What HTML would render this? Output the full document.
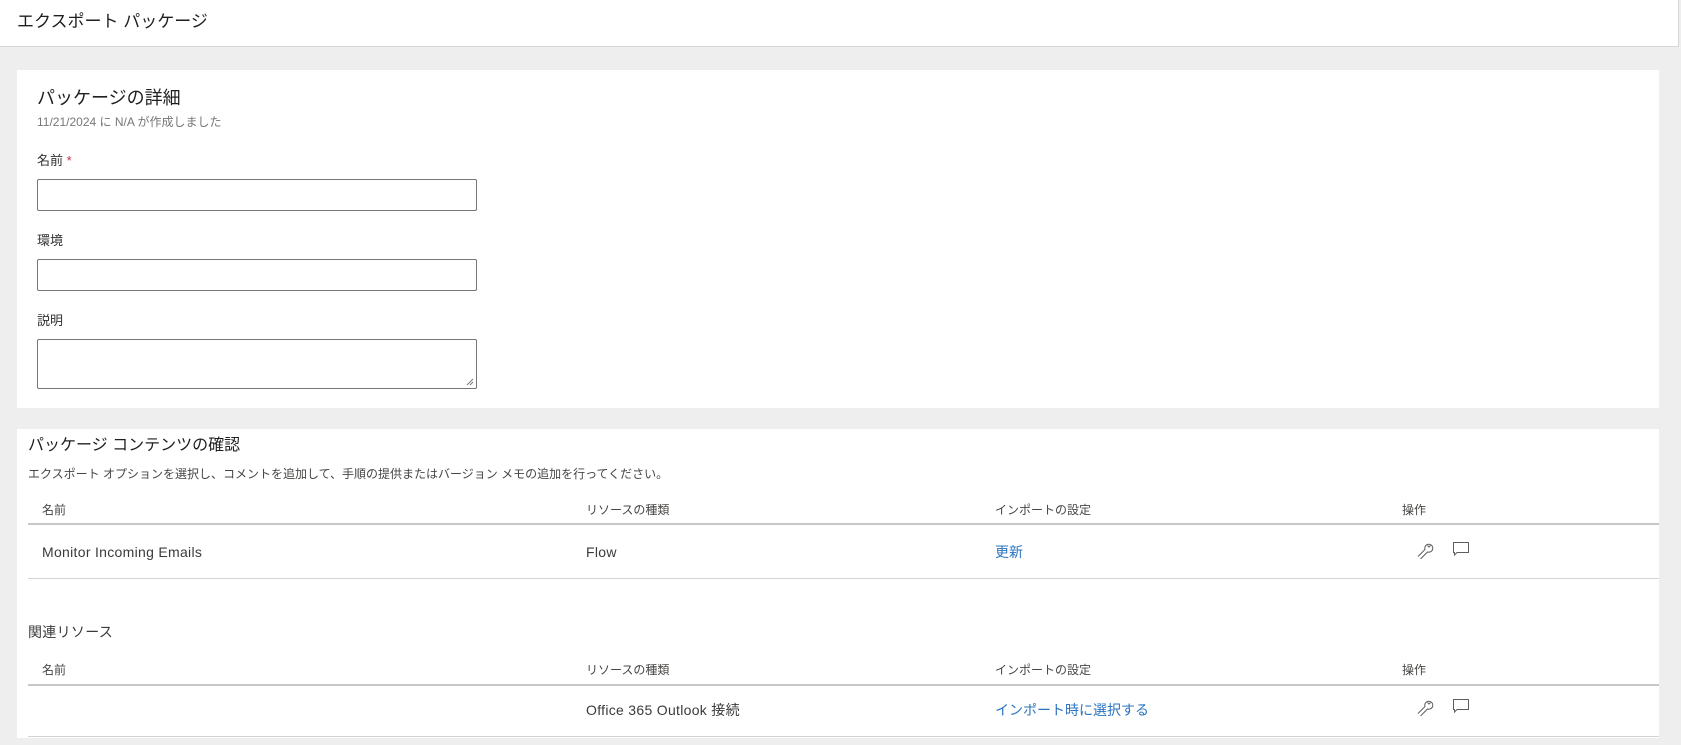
<!DOCTYPE html>
<html><head><meta charset="utf-8"><style>
*{box-sizing:border-box;margin:0;padding:0}
body{width:1681px;height:745px;background:#eeeeee;font-family:"Liberation Sans","Noto Sans CJK JP",sans-serif;color:#323130;position:relative;overflow:hidden}
.a{position:absolute;white-space:nowrap;line-height:1}
.hdr{position:absolute;left:0;top:0;width:1679px;height:47px;background:#fff;border-bottom:1px solid #d6d6d6;border-right:1px solid #d6d6d6}
.card{position:absolute;background:#fff;left:17px;width:1642px}
.inp{position:absolute;left:37px;width:440px;border:1px solid #767676;border-radius:2px;background:#fff}
.line{position:absolute;left:28px;width:1631px;background:#d4d4d4}
.th{font-size:12px;color:#484644}
.td{font-size:14px;color:#3b3a39;letter-spacing:0.3px}
.lk{font-size:14px;color:#2a74c0}
</style></head><body>
<div class="hdr"></div>
<div class="a" style="left:17px;top:13px;font-size:17px;color:#201f1e">エクスポート パッケージ</div>

<div class="card" style="top:70px;height:338px"></div>
<div class="a" style="left:37px;top:89px;font-size:18px;color:#201f1e">パッケージの詳細</div>
<div class="a" style="left:37px;top:116px;font-size:12px;color:#797775">11/21/2024 に N/A が作成しました</div>
<div class="a" style="left:37px;top:154px;font-size:13px">名前 <span style="color:#c4314b">*</span></div>
<div class="inp" style="top:179px;height:32px"></div>
<div class="a" style="left:37px;top:234px;font-size:13px">環境</div>
<div class="inp" style="top:259px;height:32px"></div>
<div class="a" style="left:37px;top:314px;font-size:13px">説明</div>
<div class="inp" style="top:339px;height:50px"></div>
<svg class="a" style="left:466px;top:378px" width="8" height="8"><path d="M1 7L7 1M4 7L7 4" stroke="#777" stroke-width="1"/></svg>

<div class="card" style="top:429px;height:309px"></div>
<div class="a" style="left:28px;top:438px;font-size:16px;color:#201f1e">パッケージ コンテンツの確認</div>
<div class="a" style="left:28px;top:468px;font-size:12px;color:#484644">エクスポート オプションを選択し、コメントを追加して、手順の提供またはバージョン メモの追加を行ってください。</div>

<div class="a th" style="left:42px;top:504px">名前</div>
<div class="a th" style="left:586px;top:504px">リソースの種類</div>
<div class="a th" style="left:995px;top:504px">インポートの設定</div>
<div class="a th" style="left:1402px;top:504px">操作</div>
<div class="line" style="top:523px;height:2px;background:#c8c8c8"></div>
<div class="a td" style="left:42px;top:545px">Monitor Incoming Emails</div>
<div class="a td" style="left:586px;top:545px">Flow</div>
<div class="a lk" style="left:995px;top:545px">更新</div>
<div class="line" style="top:578px;height:1px"></div>

<div class="a td" style="left:28px;top:625px">関連リソース</div>
<div class="a th" style="left:42px;top:664px">名前</div>
<div class="a th" style="left:586px;top:664px">リソースの種類</div>
<div class="a th" style="left:995px;top:664px">インポートの設定</div>
<div class="a th" style="left:1402px;top:664px">操作</div>
<div class="line" style="top:684px;height:2px;background:#c8c8c8"></div>
<div class="a td" style="left:586px;top:703px">Office 365 Outlook 接続</div>
<div class="a lk" style="left:995px;top:703px">インポート時に選択する</div>
<div class="line" style="top:736px;height:1px"></div>

<svg class="a" style="left:1416px;top:541px" width="18" height="18" viewBox="0 0 18 18"><path d="M2 15.5L9 8.5A4 4 0 1 1 11.5 11L4.5 18M11.5 4.5L13 6L14.5 4.5" fill="none" stroke="#605e5c" stroke-width="1"/></svg>
<svg class="a" style="left:1452px;top:541px" width="18" height="16" viewBox="0 0 18 16"><path d="M1.5 1.5H16.5V11.5H5L2.5 14V11.5H1.5Z" fill="none" stroke="#605e5c" stroke-width="1"/></svg>
<svg class="a" style="left:1416px;top:698px" width="18" height="18" viewBox="0 0 18 18"><path d="M2 15.5L9 8.5A4 4 0 1 1 11.5 11L4.5 18M11.5 4.5L13 6L14.5 4.5" fill="none" stroke="#605e5c" stroke-width="1"/></svg>
<svg class="a" style="left:1452px;top:698px" width="18" height="16" viewBox="0 0 18 16"><path d="M1.5 1.5H16.5V11.5H5L2.5 14V11.5H1.5Z" fill="none" stroke="#605e5c" stroke-width="1"/></svg>
</body></html>
